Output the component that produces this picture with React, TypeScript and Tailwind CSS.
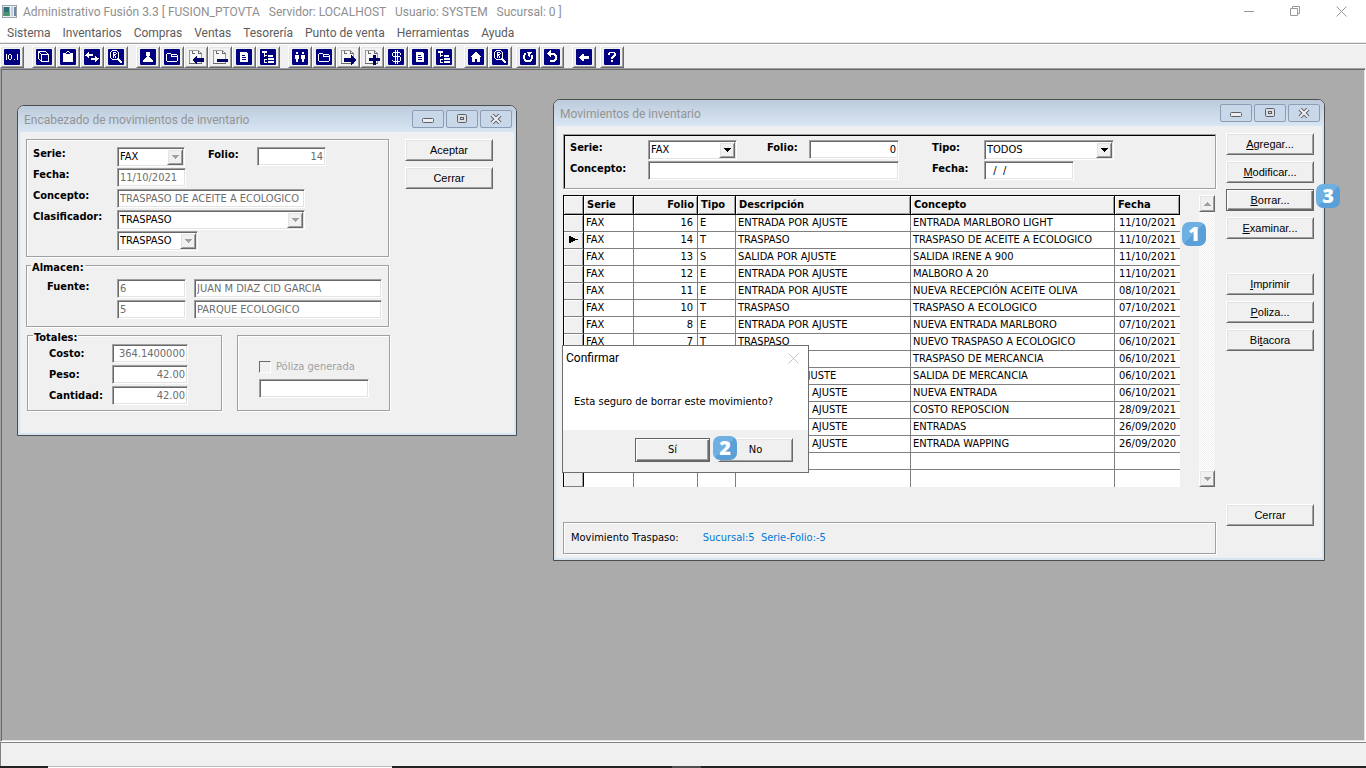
import { useState } from "react";
import type { ReactNode } from "react";

interface Movement {
  serie?: string;
  folio?: number;
  tipo?: string;
  descripcion?: string;
  concepto: string;
  fecha: string;
}

const menuItems = [
  "Sistema",
  "Inventarios",
  "Compras",
  "Ventas",
  "Tesorería",
  "Punto de venta",
  "Herramientas",
  "Ayuda",
];

const movements: Movement[] = [
  { serie: "FAX", folio: 16, tipo: "E", descripcion: "ENTRADA POR AJUSTE", concepto: "ENTRADA MARLBORO LIGHT", fecha: "11/10/2021" },
  { serie: "FAX", folio: 14, tipo: "T", descripcion: "TRASPASO", concepto: "TRASPASO DE ACEITE A ECOLOGICO", fecha: "11/10/2021" },
  { serie: "FAX", folio: 13, tipo: "S", descripcion: "SALIDA POR AJUSTE", concepto: "SALIDA IRENE A 900", fecha: "11/10/2021" },
  { serie: "FAX", folio: 12, tipo: "E", descripcion: "ENTRADA POR AJUSTE", concepto: "MALBORO A 20", fecha: "11/10/2021" },
  { serie: "FAX", folio: 11, tipo: "E", descripcion: "ENTRADA POR AJUSTE", concepto: "NUEVA RECEPCIÓN ACEITE OLIVA", fecha: "08/10/2021" },
  { serie: "FAX", folio: 10, tipo: "T", descripcion: "TRASPASO", concepto: "TRASPASO A ECOLOGICO", fecha: "07/10/2021" },
  { serie: "FAX", folio: 8, tipo: "E", descripcion: "ENTRADA POR AJUSTE", concepto: "NUEVA ENTRADA MARLBORO", fecha: "07/10/2021" },
  { serie: "FAX", folio: 7, tipo: "T", descripcion: "TRASPASO", concepto: "NUEVO TRASPASO A ECOLOGICO", fecha: "06/10/2021" },
  { concepto: "TRASPASO DE MERCANCIA", fecha: "06/10/2021" },
  { descripcion: "SALIDA POR AJUSTE", concepto: "SALIDA DE MERCANCIA", fecha: "06/10/2021" },
  { descripcion: "ENTRADA POR AJUSTE", concepto: "NUEVA ENTRADA", fecha: "06/10/2021" },
  { descripcion: "ENTRADA POR AJUSTE", concepto: "COSTO REPOSCION", fecha: "28/09/2021" },
  { descripcion: "ENTRADA POR AJUSTE", concepto: "ENTRADAS", fecha: "26/09/2020" },
  { descripcion: "ENTRADA POR AJUSTE", concepto: "ENTRADA WAPPING", fecha: "26/09/2020" },
];

const uiFont = "font-[Roboto,'Open_Sans',sans-serif]";
const formFont = "font-['DejaVu_Sans_Condensed','DejaVu_Sans',sans-serif]";
const buttonFont = "font-['Liberation_Sans',Arial,sans-serif]";

// white shapes drawn over the navy tile
const glyphs: Record<string, ReactNode> = {
  digits: (
    <path d="M2 5h1v6h-1zM5 5h2v1h-2zM5 10h2v1h-2zM4 6h1v4h-1zM7 6h1v4h-1zM10 10h1v1h-1zM13 5h1v6h-1z" fill="#fff" />
  ),
  cube: <path d="M5.500 5.500h7v7h-7zM2.500 9.500v-6l1-1h6l3 3M2.500 2.500l3 3M2.500 9.500l3 3" stroke="#fff" fill="none" />,
  clipboard: <path d="M3 4h3v-1h1v-1h2v1h1v1h3v9h-10zM6 4v1h4v-1h-1v-1h-2v1z" fill="#fff" fillRule="evenodd" />,
  swap: <path d="M1 6h1v-1h1v-1h1v-1h1v2h4v2h-4v2h-1v-1h-1v-1h-2zM15 10h-1v1h-1v1h-1v1h-1v-2h-4v-2h4v-2h1v1h1v1h2z" fill="#fff" />,
  search: (
    <>
      <path d="M4.500 1.500h4l2 2v5l-2 2h-4l-2-2v-5z" stroke="#fff" fill="none" />
      <path d="M5 3h3v1h-2v1h2v1h-1v1h1v2h-1v-2h-1v2h-1zM8 4h1v1h-1z" fill="#fff" />
      <path d="M10 9h1v1h1v1h1v1h1v2h-2v-1h-1v-1h-1v-1h-1v-1h1z" fill="#fff" />
    </>
  ),
  person: <path d="M6 3h4v4h-1v1h1v1h1v1h1v1h1v2h-10v-2h1v-1h1v-1h1v-1h1v-1h-1z" fill="#fff" />,
  folder: <path d="M2.500 11.500v-6l1-1h3l1 1h5l1 1v5l-1 1h-9zM7.500 7.500h5M7.500 7.500v-2" stroke="#fff" fill="none" />,
  doc: <path d="M4 3h6l2 2v8h-8zM6 6v1h3v-1zM6 8v1h4v-1zM6 10v1h4v-1z" fill="#fff" fillRule="evenodd" />,
  tree: (
    <path d="M2 2h5v2h-5zM4 4h1v9h2v1h-3v-4h3v1h-2M4 6h3v1h-3zM8 6h5v2h-5zM8 9h6v2h-6zM8 12h6v2h-6z" fill="#fff" />
  ),
  people: <path d="M4 3h2v2h-2zM3 6h4v4h-1v3h-2v-3h-1zM10 3h2v2h-2zM9 6h4v4h-1v3h-2v-3h-1z" fill="#fff" />,
  dollar: <path d="M12.500 5.500v-1l-1-1h-6l-1 1v2l1 1h6l1 1v3l-1 1h-6l-1-1v-1M7.500 1v14M9.500 1v14" stroke="#fff" fill="none" />,
  home: <path d="M8 3l6 5h-2v5h-3v-3h-2v3h-3v-5h-2z" fill="#fff" />,
  refresh: <path d="M5 4h-1v2h-1v4h1v2h1v1h6v-1h1v-2h1v-4h-2v4h-1v1h-4v-1h-1v-4h1v-2zM7 3h5v1h-1v1h-1v3h-1v-1h-1v-3h-1z" fill="#fff" />,
  undo: <path d="M7 2v2h4v1h1v1h1v5h-1v1h-1v1h-5v-2h4v-1h1v-3h-1v-1h-3v2h-1v-1h-1v-1h-1v-1h-1v-1h1v-1h1v-1h1v-1z" fill="#fff" />,
  back: <path d="M3 8h1v-1h1v-1h1v-1h2v2h5v3h-5v2h-2v-1h-1v-1h-1v-1h-1z" fill="#fff" />,
  help: <path d="M4 6v-2h1v-1h6v1h1v3h-1v1h-1v1h-1v1h-2v-2h1v-1h1v-1h1v-2h-4v2zM7 11h2v2h-2z" fill="#fff" />,
};

// navy marks drawn over a grey sheet
const sheetMarks: Record<string, ReactNode> = {
  sheetLeft: <path d="M4 11l5-5v3h7v4h-7v3z" fill="#000066" />,
  sheetMinus: <path d="M5 10h11v3h-11z" fill="#000066" />,
  sheetRight: <path d="M16 11l-5-5v3h-7v4h7v3z" fill="#000066" />,
  sheetPlus: <path d="M9 6h3v3h4v3h-4v4h-3v-4h-4v-3h4z" fill="#000066" />,
};

function ToolIcon({ name }: { name: string }) {
  if (sheetMarks[name]) {
    return (
      <svg width="16" height="16" viewBox="0 0 16 16" shapeRendering="crispEdges" aria-hidden="true">
        <path d="M1.500 1.500h9l3 3v10h-12z" fill="#f6f6f6" stroke="#9a9a9a" />
        <path d="M1 14.500h13M10.500 1.500v3h3M4 2v2h3" fill="none" stroke="#6a6a6a" />
        {sheetMarks[name]}
      </svg>
    );
  }
  return (
    <svg width="16" height="16" viewBox="0 0 16 16" aria-hidden="true">
      <rect width="16" height="16" rx="1" fill="#000080" />
      <g shapeRendering="crispEdges">{glyphs[name]}</g>
    </svg>
  );
}

const toolGroups = [
  { icons: ["digits"], gap: "mr-2" },
  { icons: ["cube", "clipboard", "swap", "search"], gap: "mr-2" },
  { icons: ["person", "folder", "sheetLeft", "sheetMinus", "doc", "tree"], gap: "mr-2" },
  { icons: ["people", "folder", "sheetRight", "sheetPlus", "dollar", "doc", "tree"], gap: "mr-2" },
  { icons: ["home", "search"], gap: "mr-1" },
  { icons: ["refresh", "undo"], gap: "mr-2" },
  { icons: ["back"], gap: "mr-1" },
  { icons: ["help"], gap: "" },
];

const raised =
  "bg-[#f0f0f0] border border-t-white border-l-white border-r-[#696969] border-b-[#696969] shadow-[inset_1px_1px_#e3e3e3,inset_-1px_-1px_#a0a0a0]";
// dark frame all round, for the button that Enter presses
const raisedDefault =
  "bg-[#f0f0f0] border border-[#646464] shadow-[inset_1px_1px_#fff,inset_-1px_-1px_#696969,inset_-2px_-2px_#a0a0a0]";
const sunken =
  "bg-white border border-t-[#a0a0a0] border-l-[#a0a0a0] border-r-white border-b-white shadow-[inset_1px_1px_#696969,inset_-1px_-1px_#e3e3e3]";
const etched = "border border-[#a0a0a0] shadow-[1px_1px_#fff,inset_1px_1px_#fff]";

function Arrow({ up, color }: { up?: boolean; color: string }) {
  return (
    <svg width="7" height="4" viewBox="0 0 7 4" shapeRendering="crispEdges" aria-hidden="true">
      <path d={up ? "M0 4h7l-3.500-4z" : "M0 0h7l-3.500 4z"} fill={color} />
    </svg>
  );
}

interface FieldProps {
  label: string;
  value?: string;
  width: string;
  right?: boolean;
  disabled?: boolean;
}

function Field({ label, value = "", width, right, disabled }: FieldProps) {
  return (
    <input
      type="text"
      aria-label={label}
      defaultValue={value}
      disabled={disabled}
      className={`block h-[19px] px-[2px] text-[11px] leading-4 text-black disabled:text-[#6d6d6d] ${sunken} ${width} ${right ? "text-right" : ""}`}
    />
  );
}

function Select({ label, value, width, disabled }: FieldProps) {
  return (
    <div className={`relative h-5 ${width}`}>
      <select
        aria-label={label}
        disabled={disabled}
        className={`block h-full w-full appearance-none pl-[2px] text-[11px] leading-4 text-black opacity-100 ${sunken}`}
      >
        <option>{value}</option>
      </select>
      <span className={`pointer-events-none absolute top-[2px] right-[2px] flex h-4 w-4 items-center justify-center ${raised}`}>
        <Arrow color={disabled ? "#a0a0a0" : "#000"} />
      </span>
    </div>
  );
}

function PushButton({ children, isDefault, size = "h-[22px] w-[88px]" }: { children: ReactNode; isDefault?: boolean; size?: string }) {
  return (
    <button type="button" className={`text-[11px] leading-4 text-black ${size} ${isDefault ? raisedDefault : raised}`}>
      {children}
    </button>
  );
}

function WindowFrame({ title, children }: { title: string; children: ReactNode }) {
  const caption =
    "flex h-[18px] w-8 items-center justify-center rounded-[2px] border border-[#8d9db8] bg-[#c9d8e8]";
  return (
    <div className="overflow-hidden rounded-t-[7px] border border-[#4d4d4f] bg-[#f0f0f0] shadow-[inset_0_0_0_2px_#d7e4f2]">
      <div className="flex h-[26px] items-center justify-between bg-gradient-to-b from-[#bccbdb] to-[#d9e6f4] pr-1 pl-[6px]">
        <h2 className={`pt-px text-[12px] leading-4 text-[#949494] ${uiFont}`}>{title}</h2>
        <div className="flex gap-[2px]">
          <button type="button" aria-label="Minimizar" className={caption}>
            <svg width="12" height="10" viewBox="0 0 12 10">
              <rect x="0.500" y="4.500" width="11" height="4" rx="1" fill="#eee" stroke="#5a5f6e" />
            </svg>
          </button>
          <button type="button" aria-label="Maximizar" className={caption}>
            <svg width="12" height="10" viewBox="0 0 12 10">
              <rect x="1.500" y="0.500" width="9" height="8" rx="1" fill="#ddd" stroke="#5a5f6e" />
              <rect x="4.500" y="3.500" width="3" height="2" fill="#cdd9e6" stroke="#5a5f6e" />
            </svg>
          </button>
          <button type="button" aria-label="Cerrar ventana" className={caption}>
            <svg width="12" height="10" viewBox="0 0 12 10">
              <path d="M2 1l8 8M10 1l-8 8" stroke="#5a5f6e" strokeWidth="4" />
              <path d="M2 1l8 8M10 1l-8 8" stroke="#f2f2f2" strokeWidth="2" />
            </svg>
          </button>
        </div>
      </div>
      {children}
    </div>
  );
}

function StepBadge({ n, place }: { n: number; place: string }) {
  return (
    <span
      className={`absolute flex h-6 w-6 items-center justify-center rounded-[7px] bg-gradient-to-br from-[#6fb0e2] from-50% to-[#5a9fd8] to-50% font-['Open_Sans',sans-serif] text-[20px] leading-6 font-extrabold text-white ${place}`}
    >
      {n}
    </span>
  );
}

function HeaderWindow() {
  const label = "h-[21px] font-bold leading-4";
  return (
    <WindowFrame title="Encabezado de movimientos de inventario">
      <div className="flex items-start gap-4 px-2 pt-[7px] pb-6">
        <div className="w-[363px]">
          <section className={`h-[118px] pt-[6px] pl-[6px] ${etched}`}>
            <div className="flex">
              <div className="w-[84px]">
                <p className={label}>Serie:</p>
                <p className={label}>Fecha:</p>
                <p className={label}>Concepto:</p>
                <p className={label}>Clasificador:</p>
              </div>
              <div className="flex flex-col gap-px pt-px">
                <div className="flex">
                  <Select label="Serie" value="FAX" width="w-[68px]" disabled />
                  <p className="w-[72px] pl-[23px] leading-4 font-bold">Folio:</p>
                  <Field label="Folio" value="14" width="w-[69px]" right disabled />
                </div>
                <div className="h-5">
                  <Field label="Fecha" value="11/10/2021" width="w-[69px]" disabled />
                </div>
                <div className="h-5">
                  <Field label="Concepto" value="TRASPASO DE ACEITE A ECOLOGICO" width="w-[188px]" disabled />
                </div>
                <Select label="Clasificador" value="TRASPASO" width="w-[188px]" disabled />
                <Select label="Subclasificador" value="TRASPASO" width="w-[81px]" disabled />
              </div>
            </div>
          </section>

          <fieldset className={`relative mt-2 h-[62px] pt-[13px] pl-5 ${etched}`}>
            <legend className="absolute -top-[6px] left-1 bg-[#f0f0f0] px-px leading-4 font-bold">Almacen:</legend>
            <div className="flex">
              <p className="w-[70px] leading-4 font-bold">Fuente:</p>
              <div className="grid grid-cols-[69px_188px] gap-x-2 gap-y-[2px]">
                <Field label="Fuente" value="6" width="w-full" disabled />
                <Field label="Nombre de fuente" value="JUAN M DIAZ CID GARCIA" width="w-full" disabled />
                <Field label="Destino" value="5" width="w-full" disabled />
                <Field label="Nombre de destino" value="PARQUE ECOLOGICO" width="w-full" disabled />
              </div>
            </div>
          </fieldset>

          <div className="-mr-px mt-2 flex gap-[15px] pl-px">
            <fieldset className={`relative h-[76px] w-[195px] shrink-0 pt-2 pl-[21px] ${etched}`}>
              <legend className="absolute -top-[6px] left-[5px] bg-[#f0f0f0] px-px leading-4 font-bold">Totales:</legend>
              <div className="flex">
                <div className="w-[63px] pt-[2px]">
                  <p className={label}>Costo:</p>
                  <p className={label}>Peso:</p>
                  <p className={label}>Cantidad:</p>
                </div>
                <div className="flex flex-col gap-[2px]">
                  <Field label="Costo" value="364.1400000" width="w-[76px]" right disabled />
                  <Field label="Peso" value="42.00" width="w-[76px]" right disabled />
                  <Field label="Cantidad" value="42.00" width="w-[76px]" right disabled />
                </div>
              </div>
            </fieldset>
            <section className={`h-[76px] flex-1 pt-[23px] pl-[21px] ${etched}`}>
              <label className="flex items-center gap-[5px] leading-4 text-[#a0a0a0]">
                <input
                  type="checkbox"
                  disabled
                  className="h-3 w-3 appearance-none border border-t-[#696969] border-r-white border-b-white border-l-[#696969]"
                />
                Póliza generada
              </label>
              <div className="mt-1">
                <Field label="Póliza" width="w-[110px]" disabled />
              </div>
            </section>
          </div>
        </div>
        <div className={`flex flex-col gap-[6px] ${buttonFont}`}>
          <PushButton>Aceptar</PushButton>
          <PushButton>Cerrar</PushButton>
        </div>
      </div>
    </WindowFrame>
  );
}

function MovementsTable() {
  const [selected, setSelected] = useState(1);
  const rows: (Movement | null)[] = [...movements, null, null];
  const th =
    "h-5 border-t border-r border-b border-black bg-[#f0f0f0] px-[3px] leading-4 font-bold shadow-[inset_1px_1px_#fff,inset_-1px_-1px_#a0a0a0]";
  const td = "h-[17px] border-r border-b border-[#808080] bg-white px-[2px] leading-4 whitespace-nowrap group-last:border-b-0";
  return (
    <table className="w-[617px] table-fixed border-separate border-spacing-0 border-l border-black">
      <colgroup>
        <col className="w-5" />
        <col className="w-[50px]" />
        <col className="w-16" />
        <col className="w-[38px]" />
        <col className="w-[175px]" />
        <col className="w-[204px]" />
        <col className="w-[65px]" />
      </colgroup>
      <thead>
        <tr>
          <th className={th} aria-label="Selección" />
          <th className={`${th} text-left`}>Serie</th>
          <th className={`${th} text-right`}>Folio</th>
          <th className={`${th} text-left`}>Tipo</th>
          <th className={`${th} text-left`}>Descripción</th>
          <th className={`${th} text-left`}>Concepto</th>
          <th className={`${th} text-left`}>Fecha</th>
        </tr>
      </thead>
      <tbody>
        {rows.map((row, i) => (
          <tr key={i} className="group" onClick={() => setSelected(i)}>
            <td className="h-[17px] border-r border-b border-r-black border-b-[#808080] bg-[#f0f0f0] shadow-[inset_1px_1px_#fff,inset_-1px_0_#a0a0a0]">
              {i === selected && (
                <svg className="mx-auto block" width="9" height="8" viewBox="0 0 9 8" shapeRendering="crispEdges">
                  <path d="M0 0h2v1h2v1h2v1h3v1h-3v1h-2v1h-2v1h-2z" fill="#000" />
                </svg>
              )}
            </td>
            <td className={td}>{row?.serie}</td>
            <td className={`${td} text-right`}>
              <span className="pr-[2px]">{row?.folio}</span>
            </td>
            <td className={td}>{row?.tipo}</td>
            <td className={td}>{row?.descripcion}</td>
            <td className={td}>{row?.concepto}</td>
            <td className="h-[17px] border-b border-[#808080] bg-white px-1 text-right leading-4 group-last:border-b-0">{row?.fecha}</td>
          </tr>
        ))}
      </tbody>
    </table>
  );
}

function MovementsWindow() {
  const label = "leading-4 font-bold";
  return (
    <WindowFrame title="Movimientos de inventario">
      <div className="flex gap-[10px] pt-[7px] pr-[10px] pb-[6px] pl-[9px]">
        <div className="min-w-0 flex-1">
          <section className="mt-px flex h-[55px] gap-x-[33px] border border-[#a0a0a0] pt-[5px] pl-[6px] shadow-[1px_1px_#fff,inset_1px_1px_#000]">
            <div className="grid grid-cols-[78px_89px_72px_90px] content-start gap-y-px">
              <p className={label}>Serie:</p>
              <Select label="Serie" value="FAX" width="w-[89px]" />
              <p className="pl-[30px] leading-4 font-bold">Folio:</p>
              <Field label="Folio" value="0" width="w-full" right />
              <p className={label}>Concepto:</p>
              <div className="col-span-3">
                <Field label="Concepto" width="w-full" />
              </div>
            </div>
            <div className="grid grid-cols-[52px_130px] content-start gap-y-px">
              <p className={label}>Tipo:</p>
              <Select label="Tipo" value="TODOS" width="w-[130px]" />
              <p className={label}>Fecha:</p>
              <Field label="Fecha" value="  /  /" width="w-[90px]" />
            </div>
          </section>

          <div className="mt-[6px] flex justify-between pr-px">
            <MovementsTable />
            <div className="flex w-4 flex-col bg-[repeating-conic-gradient(#fff_0_25%,#f0f0f0_0_50%)] bg-[length:2px_2px]">
              <button type="button" aria-label="Subir" className={`flex h-[17px] items-center justify-center ${raised}`}>
                <Arrow up color="#a0a0a0" />
              </button>
              <div className="flex-1" />
              <button type="button" aria-label="Bajar" className={`flex h-[17px] items-center justify-center ${raised}`}>
                <Arrow color="#a0a0a0" />
              </button>
            </div>
          </div>

          <div className={`mt-[35px] flex h-8 items-center gap-6 pl-[7px] ${etched}`}>
            <span>Movimiento Traspaso:</span>
            <span className="whitespace-pre text-[#0078d7]">Sucursal:5{"  "}Serie-Folio:-5</span>
          </div>
        </div>

        <div className={`flex flex-col gap-[6px] ${buttonFont}`}>
          <PushButton><u>A</u>gregar...</PushButton>
          <PushButton><u>M</u>odificar...</PushButton>
          <PushButton isDefault><u>B</u>orrar...</PushButton>
          <PushButton><u>E</u>xaminar...</PushButton>
          <div className="mt-7"><PushButton><u>I</u>mprimir</PushButton></div>
          <PushButton><u>P</u>oliza...</PushButton>
          <PushButton>Bi<u>t</u>acora</PushButton>
          <div className="mt-auto pb-7"><PushButton>Cerrar</PushButton></div>
        </div>
      </div>
    </WindowFrame>
  );
}

function ConfirmDialog() {
  return (
    <div role="dialog" aria-label="Confirmar" className="border border-[#6e6e6e] bg-white">
      <div className="flex h-6 items-center justify-between pr-[9px] pl-[3px]">
        <h2 className={`text-[12px] leading-4 text-black ${uiFont}`}>Confirmar</h2>
        <button type="button" aria-label="Cerrar diálogo">
          <svg width="11" height="11" viewBox="0 0 11 11">
            <path d="M0.500 0.500l10 10M10.500 0.500l-10 10" stroke="#c4c4c4" />
          </svg>
        </button>
      </div>
      <p className="h-[60px] px-[11px] pt-6 leading-4">Esta seguro de borrar este movimiento?</p>
      <div className="flex justify-end gap-2 bg-[#f0f0f0] pt-2 pr-[15px] pb-[10px]">
        <PushButton size="h-6 w-[75px]" isDefault>Sí</PushButton>
        <PushButton size="h-6 w-[75px]">No</PushButton>
      </div>
    </div>
  );
}

export default function App() {
  const control = "flex h-5 w-[46px] items-center justify-center";
  return (
    <div className={`flex min-h-screen flex-col bg-[#f0f0f0] text-[11px] text-black ${formFont}`}>
      <header className={`bg-white text-[12px] leading-4 ${uiFont}`}>
        <div className="flex h-[23px] items-center justify-between">
          <div className="flex items-center gap-[6px] pl-[2px]">
            <svg width="15" height="13" viewBox="0 0 15 13" aria-hidden="true">
              <rect x="0.500" y="0.500" width="14" height="12" fill="#e8eef0" stroke="#9aa5ad" />
              <rect x="1.500" y="2" width="6" height="9" fill="#2f6f7a" />
              <rect x="1.500" y="7" width="6" height="4" fill="#49946f" />
              <rect x="9" y="2" width="2" height="9" fill="#c3d0d8" />
              <rect x="12" y="2" width="2" height="9" fill="#6c86a8" />
            </svg>
            <h1 className="whitespace-pre text-[#8f8f8f]">
              Administrativo Fusión 3.3 [ FUSION_PTOVTA{"   "}Servidor: LOCALHOST{"   "}Usuario: SYSTEM{"   "}Sucursal: 0 ]
            </h1>
          </div>
          <div className="flex pr-[2px]">
            <button type="button" aria-label="Minimizar" className={control}>
              <svg width="11" height="11" viewBox="0 0 11 11"><path d="M0 5.500h10" stroke="#999" /></svg>
            </button>
            <button type="button" aria-label="Restaurar" className={control}>
              <svg width="11" height="11" viewBox="0 0 11 11">
                <path d="M0.500 2.500h7v7h-7zM2.500 2.500v-2h7v7h-2" stroke="#999" fill="none" />
              </svg>
            </button>
            <button type="button" aria-label="Cerrar aplicación" className={control}>
              <svg width="11" height="11" viewBox="0 0 11 11">
                <path d="M0.500 0.500l10 10M10.500 0.500l-10 10" stroke="#999" />
              </svg>
            </button>
          </div>
        </div>
        <nav className="flex h-5 items-center gap-3 border-b border-[#e8e8e8] pl-[7px] text-[#5c5c5c]">
          {menuItems.map((item) => (
            <button type="button" key={item}>{item}</button>
          ))}
        </nav>
      </header>

      <div className="flex border-t border-[#a0a0a0] shadow-[inset_0_1px_#fff]">
        {toolGroups.map((group, g) => (
          <div key={g} className={`flex pt-[2px] ${group.gap}`}>
            {group.icons.map((icon) => (
              <button type="button" key={icon} aria-label={icon} className={`flex h-[22px] w-6 items-center justify-center ${raised}`}>
                <ToolIcon name={icon} />
              </button>
            ))}
          </div>
        ))}
      </div>

      {/* MDI area */}
      <main className="relative flex-1 overflow-hidden border border-t-[#a0a0a0] border-r-white border-b-white border-l-[#a0a0a0] bg-[#ababab] shadow-[inset_1px_1px_#696969,inset_-1px_-1px_#e3e3e3]">
        <div className="absolute top-9 left-4 w-[500px]">
          <HeaderWindow />
        </div>
        <div className="absolute top-[30px] left-[552px] w-[772px]">
          <MovementsWindow />
        </div>
        <div className="absolute top-[276px] left-[561px] w-[247px]">
          <ConfirmDialog />
        </div>
        <StepBadge n={1} place="top-[153px] left-[1181px]" />
        <StepBadge n={2} place="top-[367px] left-[712px]" />
        <StepBadge n={3} place="top-[115px] left-[1315px]" />
      </main>

      <footer>
        <div className="h-6 border-t border-l border-[#808080]" />
        <div className="flex h-[2px] bg-[#222]">
          <div className="w-12" />
          <div className="w-[344px] border-t border-[#bbb] bg-white" />
          <div className="ml-[280px] w-[29px] bg-[#4f4f4f]" />
        </div>
      </footer>
    </div>
  );
}
